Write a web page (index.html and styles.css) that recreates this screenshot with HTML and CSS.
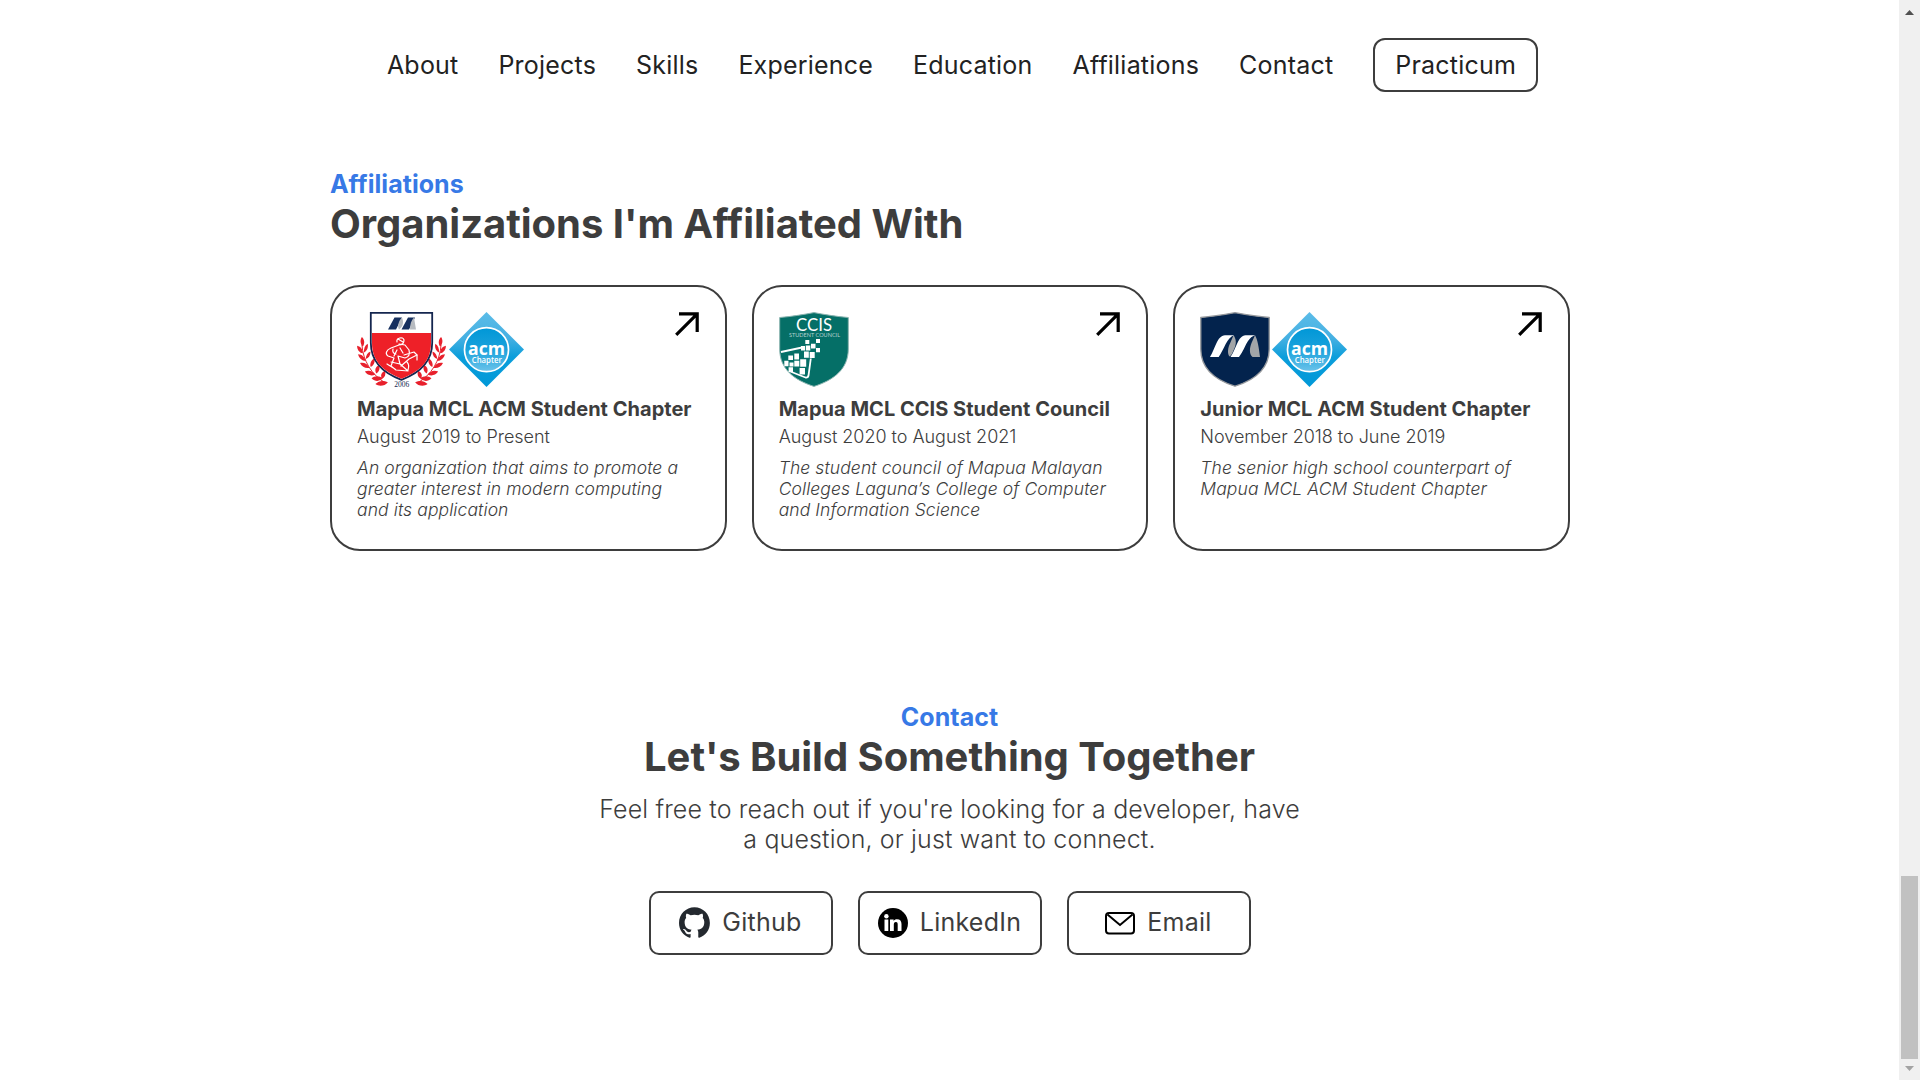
FILE: index.html
```html
<!DOCTYPE html>
<html lang="en">
<head>
<meta charset="utf-8">
<title>Portfolio</title>
<link rel="stylesheet" href="styles.css">
</head>
<body>
<svg class="defs" width="0" height="0" aria-hidden="true">
  <defs>
    <linearGradient id="acmTop" x1="0" y1="0" x2="0" y2="1">
      <stop offset="0" stop-color="#5bbce8"/><stop offset=".35" stop-color="#45b0e2"/><stop offset=".6" stop-color="#0b9edb"/><stop offset="1" stop-color="#0098d8"/>
    </linearGradient>
    <linearGradient id="acmDisc" x1="0" y1="0" x2="0" y2="1">
      <stop offset="0" stop-color="#0097d7"/><stop offset=".5" stop-color="#1ba2dc"/><stop offset="1" stop-color="#6cc3ea"/>
    </linearGradient>
    <symbol id="acm" viewBox="0 0 75 75">
      <path d="M37.5 0 75 37.5 37.5 75 0 37.5z" fill="url(#acmTop)"/>
      <circle cx="37.5" cy="37.700" r="22" fill="url(#acmDisc)" stroke="#fff" stroke-width="1.700"/>
      <text x="37.500" y="42.500" text-anchor="middle" textLength="37" lengthAdjust="spacingAndGlyphs" class="acm-name">acm</text>
      <text x="37.800" y="51" text-anchor="middle" textLength="30" lengthAdjust="spacingAndGlyphs" class="acm-sub">Chapter</text>
    </symbol>
    <symbol id="leaves" viewBox="0 0 32 52">
      <g fill="#e8202c">
        <path d="M5 0c3 3 3 7 1 10C3 7 3 3 5 0zM0 9c4 1 6 4 6 8C2 16 0 13 0 9zM11 7c1 4-1 8-4 9 0-4 1-7 4-9zM1 18c4 0 7 3 8 7-4 0-7-3-8-7zM14 15c0 4-2 7-5 8 0-4 2-7 5-8zM3 27c4-1 8 1 10 5-4 1-8-1-10-5zM18 22c1 4-1 8-4 9-1-4 1-7 4-9zM8 36c4-2 8-1 11 3-4 2-8 1-11-3zM23 29c1 4 0 7-3 9-2-4-1-7 3-9zM15 43c3-3 8-3 12 0-3 3-8 4-12 0zM29 35c1 4 0 7-3 8-2-3-1-6 3-8zM19 49c4-4 8-4 13-2-3 4-9 5-13 2z"/>
      </g>
      <path d="M5 8c1 16 10 32 25 40" fill="none" stroke="#e8202c" stroke-width="1"/>
    </symbol>
    <symbol id="arrow" viewBox="0 0 24 24">
      <path d="M4 1.800H22.200V20M22.200 1.800 1.200 22.800" fill="none" stroke="#000" stroke-width="3.200"/>
    </symbol>
  </defs>
</svg>
<div class="viewport">
  <div class="page">
    <nav class="nav">
      <a>About</a><a>Projects</a><a>Skills</a><a>Experience</a><a>Education</a><a>Affiliations</a><a>Contact</a><a class="nav-button">Practicum</a>
    </nav>
    <section class="affiliations">
      <p class="eyebrow">Affiliations</p>
      <h2 class="heading">Organizations I'm Affiliated With</h2>
      <div class="cards">
        <article class="card">
          <div class="card-top">
            <div class="logos">
              <svg class="logo" width="90" height="75" viewBox="0 0 90 75">
                <use href="#leaves" x="0" y="25" width="31" height="50"/>
                <use href="#leaves" x="0" y="25" width="31" height="50" transform="matrix(-1 0 0 1 89 0)"/>
                <path d="M13.800.8h61.400v30c0 19-12 30-30.700 37C25.800 61 13.800 50 13.800 30.800z" fill="#fff" stroke="#14264f" stroke-width="1.800"/>
                <path d="M15 21h59v10c0 18-11 28.500-29.500 35.700C26 59.500 15 49 15 31z" fill="#ee2028"/>
                <path d="M31 17.500 37.500 5.500H45L39 17.500zM44.500 17.500 51 5.500H58L52 17.500z" fill="#17305f"/>
                <path d="M45 5.500c2 5 1 9-3 12-2-4 0-9 3-12zM57 5.500 59 17.500H53c0-5 1-9 4-12z" fill="#b7bbc0"/>
                <g fill="none" stroke="#fff" stroke-width="1.200" stroke-linejoin="round" stroke-linecap="round">
                  <path d="M40 30c-1-4 6-6 7-2 0 3-2 5-5 5l-8 3c-5 2-6 6-3 8l6 2-3 8 5 4 12 1-8-7-2-8 7 2c4-1 5-4 4-8l-4-5-6-1M40 38l-3 6M34 50l9 2M30 52l8 5M44 54l8-7 8-4-3-3-10 3M51 58c1-3 1-6-1-8M43 36l3 5"/>
                  <path d="M60 43v5M36 37c-1 3 1 5 3 5M41 27l5 3"/>
                </g>
                <text x="44.800" y="74.500" text-anchor="middle" class="year">2006</text>
              </svg>
              <svg class="logo acm" width="75" height="75"><use href="#acm"/></svg>
            </div>
            <svg class="arrow" width="24" height="24"><use href="#arrow"/></svg>
          </div>
          <h3 class="card-title">Mapua MCL ACM Student Chapter</h3>
          <p class="card-date">August 2019 to Present</p>
          <p class="card-text">An organization that aims to promote a greater interest in modern computing and its application</p>
        </article>
        <article class="card">
          <div class="card-top">
            <div class="logos">
              <svg class="logo" width="70" height="75" viewBox="0 0 70 75">
                <path d="M.7 5.500C13 4.500 25 2.500 35 .6 45 2.500 57 4.500 69.300 5.500V37C69.300 57 55 68 35 74.400 15 68 .7 57 .7 37z" fill="#056f67" stroke="#8cb5b1" stroke-width="1"/>
                <text x="35" y="19" text-anchor="middle" textLength="36" lengthAdjust="spacingAndGlyphs" class="ccis">CCIS</text>
                <text x="35.500" y="24.500" text-anchor="middle" textLength="51" class="council">STUDENT COUNCIL</text>
                <path d="M2 40 23 35.500M31.800 46.500 29.500 63.500Q29 66 26.500 65.500L10 59" fill="none" stroke="#fff" stroke-width="1.800"/>
                <path fill="#fff" d="M26.300 28h4v4h-4zM37 27h4v4h-4zM32 31.700h4.500v4.700H32zM22 34h4v4.500h-4zM26.800 33.500h4.500v5h-4.500zM37 36h4v4.300h-4zM30.700 40h5v6h-5zM25 39.500h4.800v6.200H25zM15.300 41.500h4.700v6h-4.700zM9.300 43.500H14V48H9.300zM21.200 47.300h6v7.500h-6zM15.300 48.700h5v5.800h-5zM5.300 48.700h4.200v5.500H5.300zM10.500 50.500h4v4h-4zM9.600 55.300H14V60H9.600zM20.600 56h5.400v6.500h-5.400z"/>
              </svg>
            </div>
            <svg class="arrow" width="24" height="24"><use href="#arrow"/></svg>
          </div>
          <h3 class="card-title">Mapua MCL CCIS Student Council</h3>
          <p class="card-date">August 2020 to August 2021</p>
          <p class="card-text">The student council of Mapua Malayan Colleges Laguna’s College of Computer and Information Science</p>
        </article>
        <article class="card">
          <div class="card-top">
            <div class="logos">
              <svg class="logo" width="70" height="75" viewBox="0 0 70 75">
                <path d="M.8 5.500C13 4.500 25 2.500 35 .7 45 2.500 57 4.500 69.200 5.500V37C69.200 56 55 68 35 74.200 15 68 .8 56 .8 37z" fill="#03234d" stroke="#95989c" stroke-width="1.300"/>
                <path d="M33.500 23.300c3 4 3 9 .5 14-1.500 3-2 6-4.500 7.200-2.500-3-1.500-9 .5-13zM55 23.300c2.500 4 4 13 5 21.700h-7.500c-3.500-3-3-9-1-14z" fill="#a2a5a8"/>
                <path d="M10 45 C15 38 17 23.300 25 23.300H34C27 25 24 38 18.700 45zM30.500 45C36 38 38 23.300 45.500 23.300H55.300C47 25 45 38 39 45z" fill="#fff"/>
              </svg>
              <svg class="logo acm" width="75" height="75"><use href="#acm"/></svg>
            </div>
            <svg class="arrow" width="24" height="24"><use href="#arrow"/></svg>
          </div>
          <h3 class="card-title">Junior MCL ACM Student Chapter</h3>
          <p class="card-date">November 2018 to June 2019</p>
          <p class="card-text">The senior high school counterpart of Mapua MCL ACM Student Chapter</p>
        </article>
      </div>
    </section>
    <section class="contact">
      <p class="eyebrow">Contact</p>
      <h2 class="heading">Let's Build Something Together</h2>
      <p class="lead">Feel free to reach out if you're looking for a developer, have a question, or just want to connect.</p>
      <div class="buttons">
        <a class="button">
          <svg width="31" height="31" viewBox="0 0 98 96"><path fill="#24292f" fill-rule="evenodd" clip-rule="evenodd" d="M48.854 0C21.839 0 0 22 0 49.217c0 21.756 13.993 40.172 33.405 46.690 2.427.49 3.316-1.059 3.316-2.362 0-1.141-.08-5.052-.08-9.127-13.590 2.934-16.420-5.867-16.420-5.867-2.184-5.704-5.420-7.170-5.420-7.170-4.448-3.015.324-3.015.324-3.015 4.934.326 7.523 5.052 7.523 5.052 4.367 7.496 11.404 5.378 14.235 4.074.404-3.178 1.699-5.378 3.074-6.600-10.839-1.141-22.243-5.378-22.243-24.283 0-5.378 1.940-9.778 5.014-13.200-.485-1.222-2.184-6.275.486-13.038 0 0 4.125-1.304 13.426 5.052a46.970 46.970 0 0 1 12.214-1.630c4.125 0 8.330.571 12.213 1.630 9.302-6.356 13.427-5.052 13.427-5.052 2.670 6.763.97 11.816.485 13.038 3.155 3.422 5.015 7.822 5.015 13.200 0 18.905-11.404 23.060-22.324 24.283 1.780 1.548 3.316 4.481 3.316 9.126 0 6.600-.08 11.897-.08 13.526 0 1.304.89 2.853 3.316 2.364 19.412-6.520 33.405-24.935 33.405-46.691C97.707 22 75.788 0 48.854 0z"/></svg>
          <span>Github</span>
        </a>
        <a class="button">
          <svg width="30" height="30" viewBox="0 0 30 30"><circle cx="15" cy="15" r="15"/><path fill="#fff" d="M6.500 11.500h3.800v11.500H6.500zM12 11.500h3.600v1.500c.7-1.200 1.900-1.800 3.400-1.800 3.200 0 4.500 2 4.500 4.900v6.900h-3.800v-6.200c0-1.500-.2-2.700-1.800-2.700s-2.100 1.200-2.100 2.700v6.200H12z"/><circle cx="8.400" cy="8.300" r="2.200" fill="#fff"/></svg>
          <span>LinkedIn</span>
        </a>
        <a class="button">
          <svg width="30" height="30" viewBox="0 0 30 30" fill="none" stroke="#000" stroke-width="2"><rect x="1" y="5" width="28" height="20.500" rx="3"/><path d="M2.500 6.500 15 17 27.500 6.500"/></svg>
          <span>Email</span>
        </a>
      </div>
    </section>
  </div>
  <aside class="scrollbar">
    <svg class="tick up" width="9" height="5" viewBox="0 0 9 5"><path d="M0 5 4.500 0 9 5z"/></svg>
    <div class="thumb"></div>
    <svg class="tick down" width="9" height="5" viewBox="0 0 9 5"><path d="M0 0 4.500 5 9 0z"/></svg>
  </aside>
</div>
</body>
</html>
```

FILE: styles.css
```css
* { box-sizing: border-box; margin: 0; padding: 0; }
body { font-family: Inter, sans-serif; color: #3d3d3d; background: #fff; overflow: hidden; }
.defs { display: block; height: 0; }
.viewport { display: flex; height: 1080px; }
.page { flex: 1; }

.nav { display: flex; justify-content: flex-end; align-items: center; gap: 40px; padding: 38px 361px 0 0; font-size: 25px; line-height: 30px; letter-spacing: .2px; color: #222; }
.nav-button { border: 2px solid #3d3d3d; border-radius: 12px; padding: 10px 20px; }

.affiliations { width: 1240px; margin: 77px 0 0 330px; }
.eyebrow { color: #3779e6; font-size: 25px; line-height: 30px; letter-spacing: .05px; font-weight: 700; }
.heading { padding-top: 1px; font-size: 40px; line-height: 48px; letter-spacing: -.04px; font-weight: 700; }
.cards { display: grid; grid-template-columns: repeat(3, 1fr); gap: 25px; margin-top: 37px; }
.card { height: 266px; padding: 25px; border: 2px solid #3d3d3d; border-radius: 30px; }
.card-top { display: flex; justify-content: space-between; align-items: flex-start; height: 75px; }
.logo { overflow: visible; }
.logos { display: flex; gap: 2px; }
.card-title { margin-top: 10px; font-size: 20px; line-height: 24px; letter-spacing: .02px; font-weight: 700; white-space: nowrap; }
.card-date { margin-top: 5px; font-size: 18px; line-height: 22px; letter-spacing: -.03px; font-weight: 300; }
.card-text { max-width: 335px; margin-top: 9px; font-size: 17.500px; line-height: 21px; letter-spacing: .1px; font-weight: 300; font-style: italic; }

.acm-name { font: 700 18px "Open Sans", sans-serif; fill: #fff; }
.acm-sub { font: 600 8.500px "Open Sans", sans-serif; fill: #fff; }
.year { font: 7.500px "Liberation Serif", serif; fill: #14264f; }
.ccis { font: 18px Lato, sans-serif; fill: #fff; }
.council { font: 5.500px Lato, sans-serif; fill: #b5d3d0; }

.arrow { margin-right: 1px; }

.contact { display: flex; flex-direction: column; align-items: center; margin-top: 151px; text-align: center; }
.lead { width: 708px; margin-top: 13px; font-size: 25px; line-height: 30px; letter-spacing: .14px; font-weight: 300; }
.buttons { display: flex; gap: 25px; margin-top: 37px; }
.button { display: flex; align-items: center; justify-content: center; gap: 12px; width: 184px; height: 64px; padding-bottom: 1px; border: 2px solid #3d3d3d; border-radius: 10px; font-size: 25px; line-height: 30px; letter-spacing: .25px; }
.button span { margin-top: -1px; }

.scrollbar { display: flex; flex-direction: column; align-items: center; width: 21px; background: #f0f0f0; }
.tick.up { margin-top: 10px; fill: #505050; }
.tick.down { margin-top: 7px; fill: #a3a3a3; }
.thumb { width: 17px; height: 183px; margin-top: 861px; background: #c1c1c1; }
```
